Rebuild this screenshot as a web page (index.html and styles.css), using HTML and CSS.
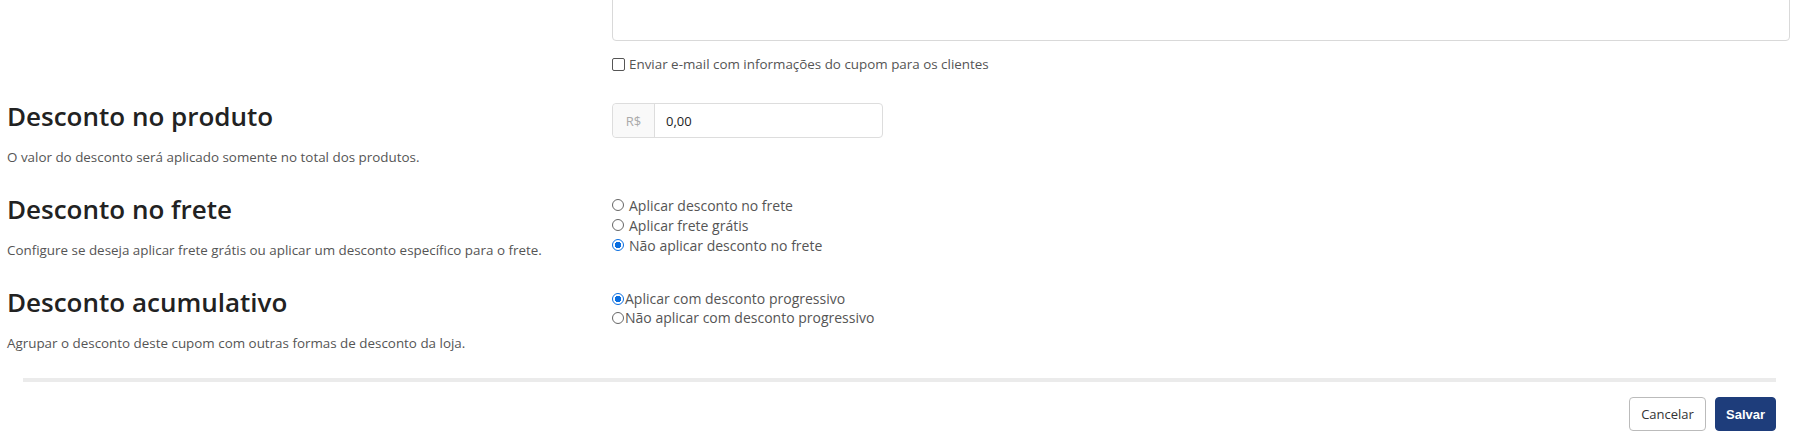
FILE: index.html
```html
<!DOCTYPE html>
<html lang="pt-BR">
<head>
<meta charset="utf-8">
<title>Cupom</title>
<link rel="stylesheet" href="styles.css">
</head>
<body>
<div class="page">
  <div class="row row-top">
    <div class="col-left"></div>
    <div class="col-right">
      <div class="textarea"></div>
      <label class="check"><span class="checkbox"></span>Enviar e-mail com informações do cupom para os clientes</label>
    </div>
  </div>

  <div class="row section">
    <div class="col-left">
      <h2 class="title">Desconto no produto</h2>
      <p class="desc">O valor do desconto será aplicado somente no total dos produtos.</p>
    </div>
    <div class="col-right">
      <div class="input-group">
        <span class="addon">R$</span>
        <span class="value">0,00</span>
      </div>
    </div>
  </div>

  <div class="row section">
    <div class="col-left">
      <h2 class="title">Desconto no frete</h2>
      <p class="desc">Configure se deseja aplicar frete grátis ou aplicar um desconto específico para o frete.</p>
    </div>
    <div class="col-right radios-frete">
      <label class="radio-line"><span class="radio"></span>Aplicar desconto no frete</label>
      <label class="radio-line"><span class="radio"></span>Aplicar frete grátis</label>
      <label class="radio-line"><span class="radio checked"></span>Não aplicar desconto no frete</label>
    </div>
  </div>

  <div class="row section">
    <div class="col-left">
      <h2 class="title">Desconto acumulativo</h2>
      <p class="desc">Agrupar o desconto deste cupom com outras formas de desconto da loja.</p>
    </div>
    <div class="col-right radios-acum">
      <label class="radio-line tight"><span class="radio checked"></span>Aplicar com desconto progressivo</label>
      <label class="radio-line tight"><span class="radio"></span>Não aplicar com desconto progressivo</label>
    </div>
  </div>

  <div class="footer">
    <div class="separator"></div>
    <div class="actions">
      <button class="btn btn-default">Cancelar</button>
      <button class="btn btn-primary">Salvar</button>
    </div>
  </div>
</div>
</body>
</html>
```

FILE: styles.css
```css
html, body {
  margin: 0;
  padding: 0;
  background: #fff;
  overflow: hidden;
}
body {
  font-family: "Open Sans", "Liberation Sans", sans-serif;
  color: #555;
  font-size: 13px;
}
.page {
  padding: 0 7px;
}
.row {
  display: grid;
  grid-template-columns: 605px 1fr;
}
.textarea {
  height: 80px;
  margin-top: -39px;
  border: 1px solid #d9d9d9;
  border-radius: 4px;
  box-sizing: border-box;
}
.check {
  display: flex;
  align-items: center;
  margin-top: 13px;
  height: 20px;
  color: #555;
  font-size: 13.4px;
}
.checkbox {
  width: 11px;
  height: 11px;
  border: 1px solid #555;
  border-radius: 2px;
  margin-right: 4px;
  flex: none;
}
.section {
  height: 93px;
}
.row-top + .section {
  margin-top: 29px;
}
.title {
  margin: 0;
  font-size: 26px;
  line-height: 26px;
  font-weight: 600;
  color: #222;
}
.desc {
  margin: 19px 0 0;
  font-size: 13.4px;
  line-height: 18px;
  color: #555;
}
.input-group {
  display: flex;
  width: 271px;
  height: 35px;
  border: 1px solid #ddd;
  border-radius: 4px;
  box-sizing: border-box;
  font-size: 13px;
}
.addon {
  width: 41px;
  flex: none;
  display: flex;
  align-items: center;
  justify-content: center;
  background: #f9f9f9;
  border-right: 1px solid #ddd;
  border-radius: 4px 0 0 4px;
  color: #aaa;
}
.value {
  display: flex;
  align-items: center;
  padding-left: 11px;
  color: #222;
}
.radios-frete {
  margin-top: -1px;
}
.radio-line {
  display: flex;
  align-items: center;
  height: 20px;
  font-size: 14px;
  color: #555;
}
.radio {
  width: 12px;
  height: 12px;
  border: 1px solid #666;
  border-radius: 50%;
  box-sizing: border-box;
  margin-right: 5px;
  flex: none;
}
.radio.checked {
  border: 1px solid #0a6ee0;
  background: radial-gradient(circle, #0a6ee0 0 3px, #fff 3.5px);
}
.tight {
  height: 19px;
}
.tight .radio {
  margin-right: 1px;
}
.footer {
  padding: 0 14px 0 16px;
}
.separator {
  height: 4px;
  background: #ebebeb;
  margin-top: -4px;
}
.actions {
  display: flex;
  justify-content: flex-end;
  gap: 9px;
  margin-top: 15px;
}
.btn {
  height: 34px;
  border-radius: 4px;
  font-size: 13px;
  box-sizing: border-box;
  padding: 0 10px;
  cursor: pointer;
}
.btn-default {
  background: #fff;
  border: 1px solid #bbb;
  color: #333;
  font-family: "Open Sans", sans-serif;
  width: 77px;
}
.btn-primary {
  background: #1e3d7b;
  border: 1px solid #1e3d7b;
  color: #fff;
  font-family: "Liberation Sans", Arial, sans-serif;
  font-weight: bold;
  width: 61px;
}
```
